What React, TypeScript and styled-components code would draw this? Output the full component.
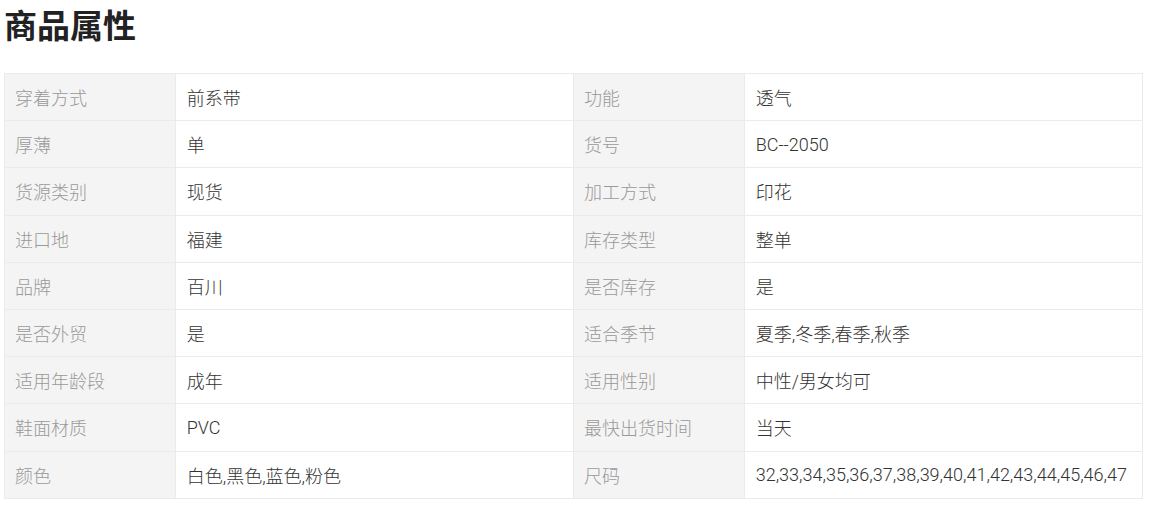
import React from 'react'
import styled, { createGlobalStyle } from 'styled-components'

const GlobalStyle = createGlobalStyle`
	body {
		margin: 0;
		padding: 0 7px 0 4px;
		background: #fff;
		font-family: Roboto, 'Noto Sans CJK SC', sans-serif;
	}
`

interface Attr {
	name: string
	value: string
}

const attributes: Attr[] = [
	{ name: '穿着方式', value: '前系带' },
	{ name: '功能', value: '透气' },
	{ name: '厚薄', value: '单' },
	{ name: '货号', value: 'BC--2050' },
	{ name: '货源类别', value: '现货' },
	{ name: '加工方式', value: '印花' },
	{ name: '进口地', value: '福建' },
	{ name: '库存类型', value: '整单' },
	{ name: '品牌', value: '百川' },
	{ name: '是否库存', value: '是' },
	{ name: '是否外贸', value: '是' },
	{ name: '适合季节', value: '夏季,冬季,春季,秋季' },
	{ name: '适用年龄段', value: '成年' },
	{ name: '适用性别', value: '中性/男女均可' },
	{ name: '鞋面材质', value: 'PVC' },
	{ name: '最快出货时间', value: '当天' },
	{ name: '颜色', value: '白色,黑色,蓝色,粉色' },
	{ name: '尺码', value: '32,33,34,35,36,37,38,39,40,41,42,43,44,45,46,47' },
]

function App() {
	// two attributes per table row
	const rows: Attr[][] = []
	for (let i = 0; i < attributes.length; i += 2) {
		rows.push(attributes.slice(i, i + 2))
	}

	return (
		<>
			<GlobalStyle />
			<StyledTitle>商品属性</StyledTitle>
			<StyledTable>
				<colgroup>
					<col width="15%" />
					<col width="35%" />
					<col width="15%" />
					<col width="35%" />
				</colgroup>
				<tbody>
					{rows.map((row) => (
						<tr key={row[0].name}>
							{row.map(({ name, value }) => (
								<React.Fragment key={name}>
									<StyledName>{name}</StyledName>
									<StyledValue>{value}</StyledValue>
								</React.Fragment>
							))}
						</tr>
					))}
				</tbody>
			</StyledTable>
		</>
	)
}

export default App

const StyledTitle = styled.h2`
	margin: 0 0 25px;
	font-size: 33px;
	line-height: 48px;
	font-weight: 700;
	color: #222;
	font-family: 'Noto Sans CJK SC', sans-serif;
`

const StyledTable = styled.table`
	width: 100%;
	table-layout: fixed;
	border-collapse: collapse;
	border: 1px solid #ebebeb;
	font-size: 18px;
	font-weight: 300;
`

const StyledCell = styled.td`
	height: 47.2px;
	padding: 0 10px;
	border: 1px solid #ebebeb;
	box-sizing: border-box;
	white-space: nowrap;
`

const StyledName = styled(StyledCell)`
	background-color: #f4f4f4;
	color: #999;
`

const StyledValue = styled(StyledCell)`
	padding-left: 11px;
	color: #333;
`
